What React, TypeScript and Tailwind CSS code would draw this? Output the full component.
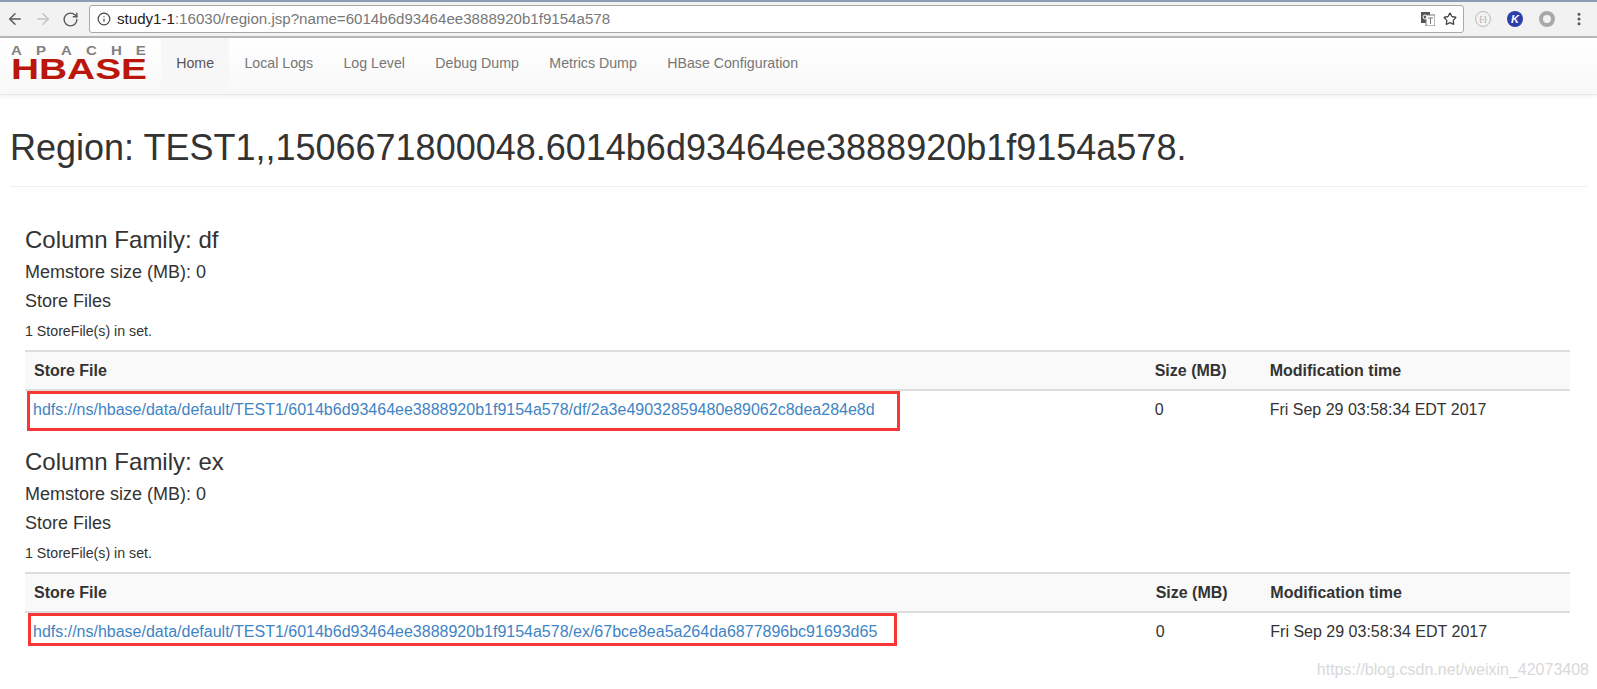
import React from "react";
import { ArrowLeft, ArrowRight, RotateCw, Info, Star, EllipsisVertical } from "lucide-react";

const NAV = ["Home", "Local Logs", "Log Level", "Debug Dump", "Metrics Dump", "HBase Configuration"];

const FAMILIES = [
  {
    name: "df",
    path: "hdfs://ns/hbase/data/default/TEST1/6014b6d93464ee3888920b1f9154a578/df/2a3e49032859480e89062c8dea284e8d",
    box: "left-[2px] w-[873px] h-[40px]",
  },
  {
    name: "ex",
    path: "hdfs://ns/hbase/data/default/TEST1/6014b6d93464ee3888920b1f9154a578/ex/67bce8ea5a264da6877896bc91693d65",
    box: "left-[3px] w-[869px] h-[33px]",
  },
];

function Logo() {
  return (
    <svg width="136" height="42" viewBox="0 0 136 42" className="block">
      <text
        transform="scale(1.2 1)"
        x="0 20.8 41.7 62.5 83.3 104"
        y="11"
        fontFamily="'Liberation Sans', sans-serif"
        fontWeight="700"
        fontSize="12.5"
        fill="#808080"
      >
        APACHE
      </text>
      <text x="0" y="35" fontFamily="'Liberation Sans', sans-serif" fontWeight="700" fontSize="29" fill="#ba160c" textLength="136" lengthAdjust="spacingAndGlyphs">
        HBASE
      </text>
    </svg>
  );
}

function ChromeBar() {
  return (
    <div className="flex h-[38px] items-center border-t-2 border-b-2 border-t-[#8c9db3] border-b-[#b9b9b9] bg-[#f2f2f2]">
      <div className="flex w-[89px] items-center gap-[10px] pl-[6px]">
        <ArrowLeft size={18} className="text-[#5a5a5a]" />
        <ArrowRight size={18} className="text-[#c4c4c4]" />
        <RotateCw size={17} className="text-[#5a5a5a]" />
      </div>
      <div className="flex h-[28px] w-[1375px] items-center rounded-[3px] border border-[#a9a9a9] bg-white pl-[7px] pr-[6px] text-[15.1px]">
        <Info size={14} className="mr-[6px] text-[#444]" />
        <span className="text-[#222]">study1-1</span>
        <span className="text-[#777]">:16030/region.jsp?name=6014b6d93464ee3888920b1f9154a578</span>
        <svg width="14" height="14" viewBox="0 0 14 14" className="ml-auto mr-[8px]">
          <rect x="0" y="0" width="9" height="11" fill="#555" />
          <rect x="5" y="3" width="9" height="11" fill="#fff" stroke="#777" />
          <circle cx="4" cy="5" r="2" fill="none" stroke="#fff" />
          <path d="M7 6h5M9.5 6v6" stroke="#777" fill="none" />
        </svg>
        <Star size={14} strokeWidth={2.2} className="text-[#444]" />
      </div>
      <div className="flex items-center gap-[16px] pl-[11px]">
        <div className="flex h-[16px] w-[16px] items-center justify-center rounded-full border border-[#bbb] text-[7px] text-[#999]">
          {"{-}"}
        </div>
        <div className="flex h-[16px] w-[16px] items-center justify-center rounded-full bg-[#2c3ea8] text-[11px] font-bold italic text-white">
          K
        </div>
        <div className="h-[16px] w-[16px] rounded-full border-[4px] border-[#a8a8a8]" />
        <EllipsisVertical size={16} strokeWidth={2.5} className="text-[#555]" />
      </div>
    </div>
  );
}

function Navbar() {
  return (
    <nav className="flex h-[57px] border-b border-[#e7e7e7] bg-gradient-to-b from-white to-[#f8f8f8] shadow-[0_1px_5px_rgba(0,0,0,0.07)]">
      <div className="flex w-[161px] items-start pl-[11px] pt-[6px]">
        <Logo />
      </div>
      <ul className="flex text-[14.2px]">
        {NAV.map((label, i) => (
          <li
            key={label}
            className={`flex items-center px-[15.2px] pb-[5px] ${i === 0 ? "bg-[#f7f7f7] text-[#555]" : "text-[#777]"}`}
          >
            {label}
          </li>
        ))}
      </ul>
    </nav>
  );
}

function FamilySection({ name, path, box }: { name: string; path: string; box: string }) {
  return (
    <section>
      <h3 className="text-[24px] leading-[27px] text-[#333]">Column Family: {name}</h3>
      <p className="mt-[8px] text-[18px] leading-[22px] text-[#333]">Memstore size (MB): 0</p>
      <p className="mt-[7px] text-[18px] leading-[22px] text-[#333]">Store Files</p>
      <p className="mt-[9px] text-[14.2px] leading-[20px] text-[#333]">1 StoreFile(s) in set.</p>
      <table className="mt-[9px] w-full border-collapse text-[16px] text-[#333]">
        <thead>
          <tr className="h-[39px] border-y-2 border-y-[#ddd] bg-[#f9f9f9] text-left">
            <th className="px-[9px] font-bold">Store File</th>
            <th className="pl-[9px] pr-[7px] font-bold">Size (MB)</th>
            <th className="pl-[9px] pr-[11px] font-bold">Modification time</th>
          </tr>
        </thead>
        <tbody>
          <tr className="h-[37px]">
            <td className="relative px-[8px] pt-[2px]">
              <a className="text-[#3f84c4]">{path}</a>
              <div className={`absolute top-0 border-[3px] border-[#f93535] ${box}`} />
            </td>
            <td className="pl-[9px] pr-[7px] pt-[2px]">0</td>
            <td className="pl-[9px] pr-[11px] pt-[2px]">Fri Sep 29 03:58:34 EDT 2017</td>
          </tr>
        </tbody>
      </table>
    </section>
  );
}

export default function App() {
  return (
    <div className="relative h-[689px] overflow-hidden bg-white font-['Liberation_Sans',Arial,sans-serif]">
      <ChromeBar />
      <Navbar />
      <div className="px-[10px]">
        <h1 className="mt-[33px] border-b border-[#eee] pb-[18px] text-[36px] leading-[40px] text-[#333]">
          Region: TEST1,,1506671800048.6014b6d93464ee3888920b1f9154a578.
        </h1>
        <div className="flex flex-col gap-[21px] pl-[15px] pr-[17px] pt-[39px]">
          {FAMILIES.map((f) => (
            <FamilySection key={f.name} {...f} />
          ))}
        </div>
      </div>
      <div className="absolute bottom-[7px] right-[8px] text-[16px] text-[#d9d9d9]">
        https://blog.csdn.net/weixin_42073408
      </div>
    </div>
  );
}
